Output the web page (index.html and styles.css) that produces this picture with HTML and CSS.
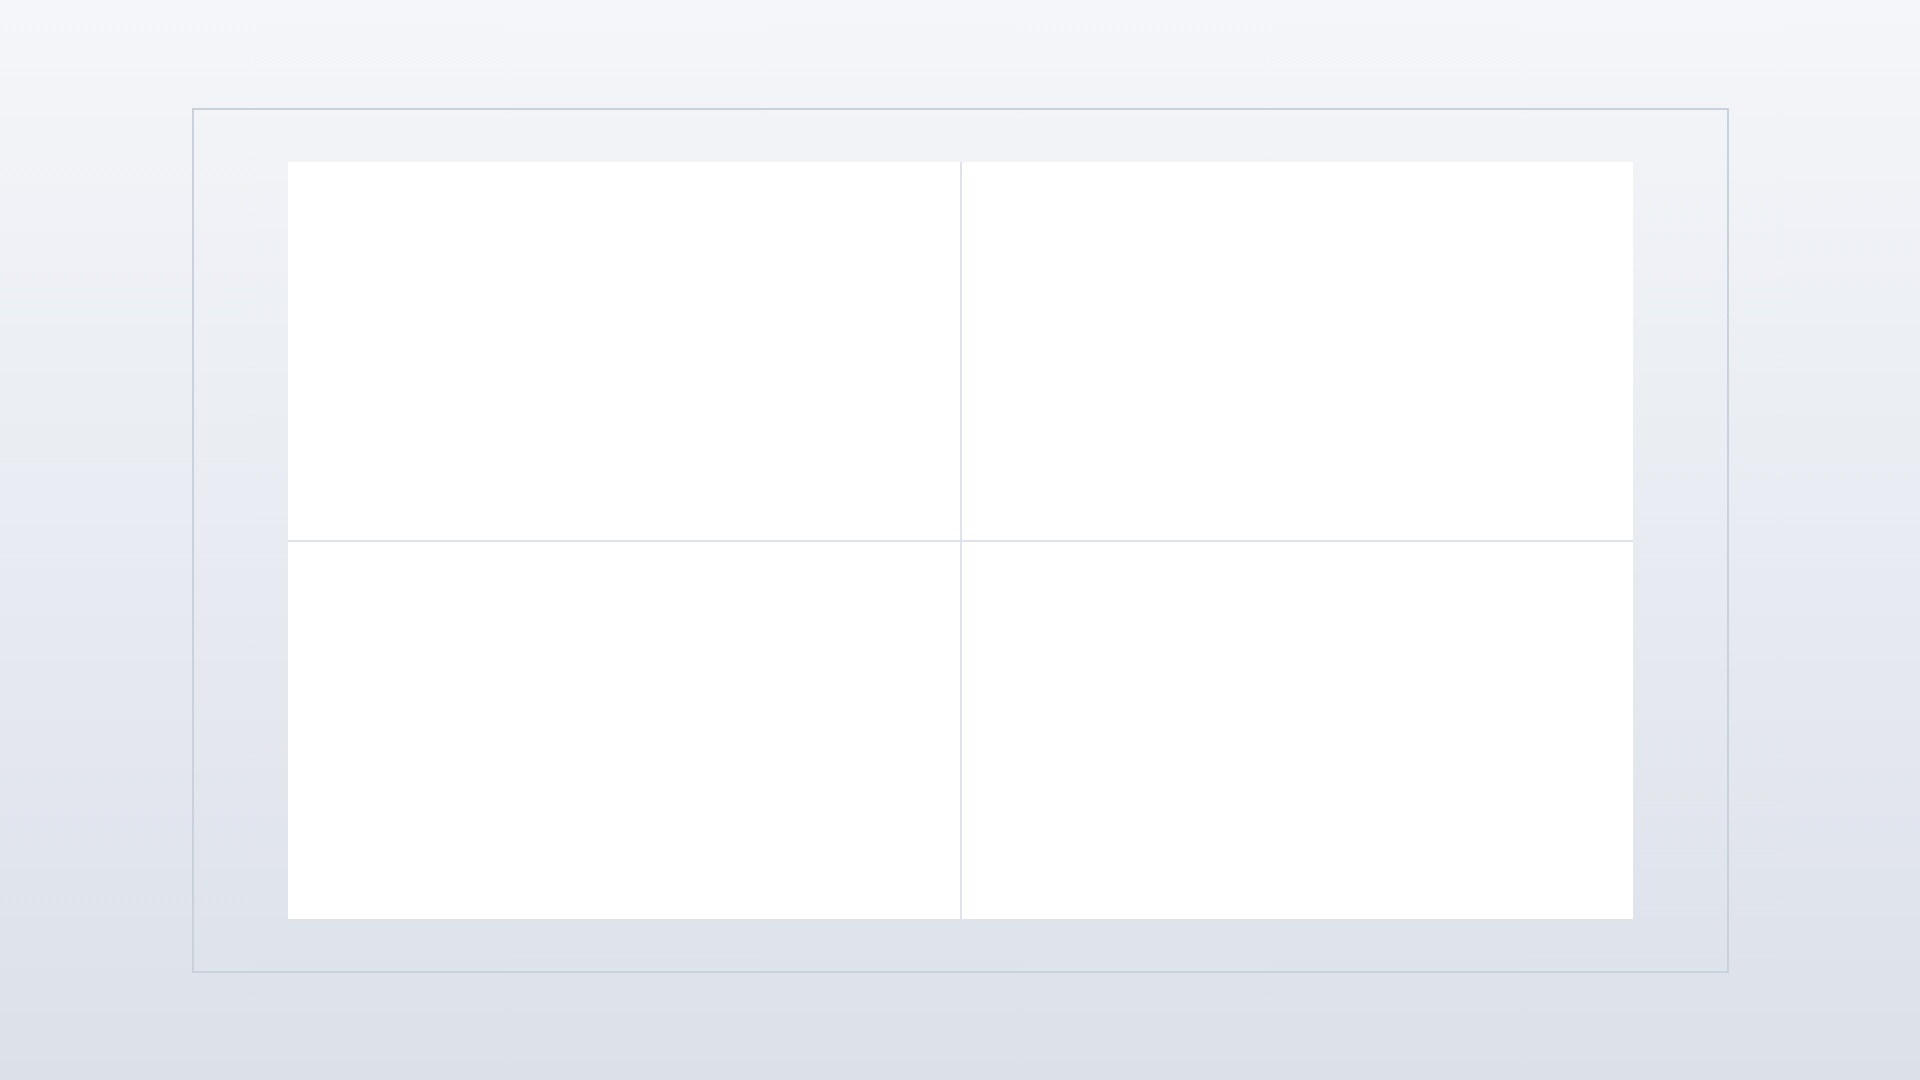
FILE: index.html
```html
<!DOCTYPE html>
<html lang="en">
<head>
<meta charset="utf-8">
<title>Grid</title>
<link rel="stylesheet" href="styles.css">
</head>
<body>
<div class="frame">
  <div class="grid">
    <div class="cell"></div>
    <div class="cell"></div>
    <div class="cell"></div>
    <div class="cell"></div>
  </div>
</div>
</body>
</html>
```

FILE: styles.css
```css
html, body {
  margin: 0;
  padding: 0;
}
body {
  width: 1920px;
  height: 1080px;
  box-sizing: border-box;
  padding: 108px 191px 0 192px;
  background: linear-gradient(to bottom, #f4f6f9 0%, #dce0e9 100%);
  font-family: "Liberation Sans", sans-serif;
}
.frame {
  box-sizing: border-box;
  width: 1537px;
  height: 865px;
  border: 2px solid #c9d1db;
  padding: 52px 0 0 94px;
}
.grid {
  width: 1345px;
  height: 757px;
  display: grid;
  grid-template-columns: 672px 671px;
  grid-template-rows: 378px 377px;
  gap: 2px;
  background: #dde2ed;
}
.cell {
  background: #ffffff;
}
```
